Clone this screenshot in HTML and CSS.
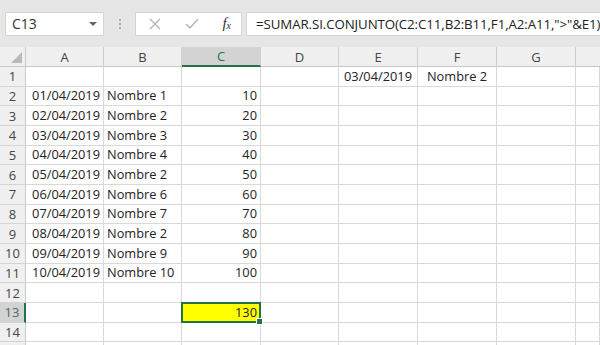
FILE: index.html
```html
<!DOCTYPE html>
<html>
<head>
<meta charset="utf-8">
<link rel="stylesheet" href="styles.css">
</head>
<body>
<div class="toolbar">
  <div class="namebox"><span class="ref">C13</span><span class="dd"></span></div>
  <div class="sep"><i></i><i></i><i></i></div>
  <div class="fbtns">
    <svg class="ic" width="14" height="14" viewBox="0 0 14 14"><path d="M2 2L12 12M12 2L2 12" stroke="#b5b5b5" stroke-width="1.4" fill="none"/></svg>
    <svg class="ic" width="16" height="14" viewBox="0 0 16 14"><path d="M2 7L6 11L14 2" stroke="#b5b5b5" stroke-width="1.4" fill="none"/></svg>
    <span class="fx">f<sub>x</sub></span>
  </div>
  <div class="fbar">=SUMAR.SI.CONJUNTO(C2:C11,B2:B11,F1,A2:A11,"&gt;"&amp;E1)</div>
</div>
<div class="sheet">
  <div class="corner"><span class="tri"></span></div>
  <div class="ch">A</div><div class="ch">B</div><div class="ch sel">C</div><div class="ch">D</div><div class="ch">E</div><div class="ch">F</div><div class="ch">G</div><div class="ch last"></div>

  <div class="rh">1</div><div class="c"></div><div class="c"></div><div class="c"></div><div class="c"></div><div class="c ctr">03/04/2019</div><div class="c ctr">Nombre 2</div><div class="c"></div><div class="c"></div>
  <div class="rh">2</div><div class="c r">01/04/2019</div><div class="c">Nombre 1</div><div class="c r">10</div><div class="c"></div><div class="c"></div><div class="c"></div><div class="c"></div><div class="c"></div>
  <div class="rh">3</div><div class="c r">02/04/2019</div><div class="c">Nombre 2</div><div class="c r">20</div><div class="c"></div><div class="c"></div><div class="c"></div><div class="c"></div><div class="c"></div>
  <div class="rh">4</div><div class="c r">03/04/2019</div><div class="c">Nombre 3</div><div class="c r">30</div><div class="c"></div><div class="c"></div><div class="c"></div><div class="c"></div><div class="c"></div>
  <div class="rh">5</div><div class="c r">04/04/2019</div><div class="c">Nombre 4</div><div class="c r">40</div><div class="c"></div><div class="c"></div><div class="c"></div><div class="c"></div><div class="c"></div>
  <div class="rh">6</div><div class="c r">05/04/2019</div><div class="c">Nombre 2</div><div class="c r">50</div><div class="c"></div><div class="c"></div><div class="c"></div><div class="c"></div><div class="c"></div>
  <div class="rh">7</div><div class="c r">06/04/2019</div><div class="c">Nombre 6</div><div class="c r">60</div><div class="c"></div><div class="c"></div><div class="c"></div><div class="c"></div><div class="c"></div>
  <div class="rh">8</div><div class="c r">07/04/2019</div><div class="c">Nombre 7</div><div class="c r">70</div><div class="c"></div><div class="c"></div><div class="c"></div><div class="c"></div><div class="c"></div>
  <div class="rh">9</div><div class="c r">08/04/2019</div><div class="c">Nombre 2</div><div class="c r">80</div><div class="c"></div><div class="c"></div><div class="c"></div><div class="c"></div><div class="c"></div>
  <div class="rh">10</div><div class="c r">09/04/2019</div><div class="c">Nombre 9</div><div class="c r">90</div><div class="c"></div><div class="c"></div><div class="c"></div><div class="c"></div><div class="c"></div>
  <div class="rh">11</div><div class="c r">10/04/2019</div><div class="c">Nombre 10</div><div class="c r">100</div><div class="c"></div><div class="c"></div><div class="c"></div><div class="c"></div><div class="c"></div>
  <div class="rh">12</div><div class="c"></div><div class="c"></div><div class="c"></div><div class="c"></div><div class="c"></div><div class="c"></div><div class="c"></div><div class="c"></div>
  <div class="rh sel">13</div><div class="c"></div><div class="c"></div><div class="c r active">130<span class="handle"></span></div><div class="c"></div><div class="c"></div><div class="c"></div><div class="c"></div><div class="c"></div>
  <div class="rh">14</div><div class="c"></div><div class="c"></div><div class="c"></div><div class="c"></div><div class="c"></div><div class="c"></div><div class="c"></div><div class="c"></div>
  <div class="rh"></div><div class="c"></div><div class="c"></div><div class="c"></div><div class="c"></div><div class="c"></div><div class="c"></div><div class="c"></div><div class="c"></div>
</div>
</body>
</html>
```
FILE: styles.css
```css
html, body {
  margin: 0;
  padding: 0;
  background: #ffffff;
  overflow: hidden;
}
body {
  width: 600px;
  height: 345px;
  font-family: "Open Sans", "Noto Sans", sans-serif;
  color: #222;
}
.toolbar {
  height: 47px;
  background: #e6e6e6;
  display: flex;
  align-items: center;
  padding-left: 5px;
  box-sizing: border-box;
}
.namebox {
  width: 99px;
  height: 24px;
  background: #fff;
  border: 1px solid #d4d4d4;
  box-sizing: border-box;
  display: flex;
  align-items: center;
  justify-content: space-between;
  padding: 0 6px 0 6px;
  font-size: 14px;
  color: #333;
}
.dd {
  width: 0;
  height: 0;
  border-left: 4px solid transparent;
  border-right: 4px solid transparent;
  border-top: 4px solid #666;
}
.sep {
  width: 31px;
  display: flex;
  flex-direction: column;
  align-items: center;
  gap: 2px;
}
.sep i {
  width: 2px;
  height: 2px;
  background: #aaa;
  display: block;
}
.fbtns {
  width: 107px;
  height: 24px;
  background: #fff;
  border: 1px solid #d4d4d4;
  box-sizing: border-box;
  display: flex;
  align-items: center;
  justify-content: space-between;
  padding: 0 10px 0 12px;
}
.fx {
  font-family: "Liberation Serif", serif;
  font-style: italic;
  font-size: 15px;
  color: #333;
  line-height: 1;
}
.fx sub {
  font-size: 10px;
  vertical-align: -1px;
}
.fbar {
  margin-left: 4px;
  flex: 1;
  height: 24px;
  background: #fff;
  border: 1px solid #d4d4d4;
  border-right: none;
  box-sizing: border-box;
  display: flex;
  align-items: center;
  padding-left: 9px;
  font-size: 13.3px;
  letter-spacing: -0.1px;
  color: #222;
  white-space: nowrap;
  overflow: hidden;
}
.sheet {
  display: grid;
  grid-template-columns: 26px 78px 78px 79px 78px 79px 79px 79px 24px;
  grid-template-rows: 20px repeat(15, 19.67px);
  font-size: 12.8px;
}
.corner {
  background: #f0f0f0;
  border-right: 1px solid #c8c8c8;
  border-bottom: 1px solid #c8c8c8;
  box-sizing: border-box;
  position: relative;
}
.tri {
  position: absolute;
  right: 3px;
  bottom: 3px;
  width: 0;
  height: 0;
  border-left: 11px solid transparent;
  border-bottom: 11px solid #b9b9b9;
}
.ch {
  background: #f0f0f0;
  border-right: 1px solid #cfcfcf;
  border-bottom: 1px solid #c8c8c8;
  box-sizing: border-box;
  display: flex;
  align-items: center;
  justify-content: center;
  font-size: 13px;
  color: #444;
}
.ch.sel {
  background: #d3d3d3;
  border-bottom: 2px solid #217346;
  color: #217346;
}
.ch.last {
  border-right: none;
}
.rh {
  background: #f0f0f0;
  border-right: 1px solid #c8c8c8;
  border-bottom: 1px solid #d4d4d4;
  box-sizing: border-box;
  display: flex;
  align-items: center;
  justify-content: center;
  font-size: 13px;
  color: #444;
}
.rh.sel {
  background: #d3d3d3;
  border-right: 2px solid #217346;
  color: #4a6b58;
}
.c {
  border-right: 1px solid #d9d9d9;
  border-bottom: 1px solid #d9d9d9;
  box-sizing: border-box;
  display: flex;
  align-items: flex-end;
  padding: 0 3px 1px 3px;
  white-space: nowrap;
  color: #222;
}
.c.r {
  justify-content: flex-end;
}
.c.ctr {
  justify-content: center;
}
.c.active {
  background: #ffff00;
  border: 2px solid #217346;
  margin: -1px 0 0 -1px;
  position: relative;
  padding: 0 2px 0 3px;
}
.handle {
  position: absolute;
  right: -4px;
  bottom: -4px;
  width: 5px;
  height: 5px;
  background: #217346;
  border: 1px solid #fff;
}
```
